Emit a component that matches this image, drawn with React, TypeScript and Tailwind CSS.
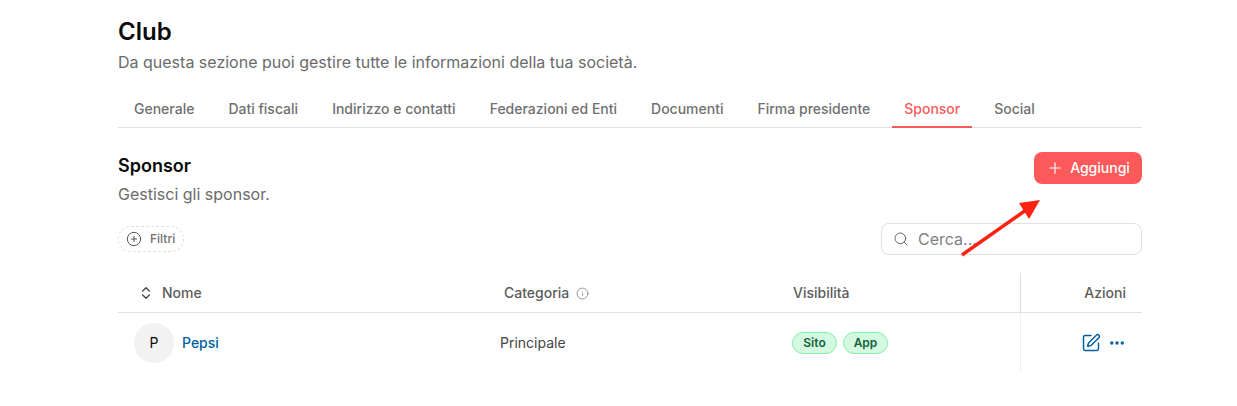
import { ChevronsUpDown, Ellipsis, Info, CirclePlus, Plus, Search, SquarePen } from 'lucide-react';

const tabs = [
  'Generale',
  'Dati fiscali',
  'Indirizzo e contatti',
  'Federazioni ed Enti',
  'Documenti',
  'Firma presidente',
  'Sponsor',
  'Social',
];

const App = () => {
  return (
    <div className="relative min-h-screen bg-white font-['Inter',sans-serif] overflow-hidden">
      <div className="w-[1024px] ml-[118px] pt-[16px]">
        {/* Intestazione */}
        <h1 className="text-2xl leading-8 font-semibold text-[#0a0a0a]">Club</h1>
        <p className="mt-[2px] text-base leading-6 text-[#6b6b6b]">
          Da questa sezione puoi gestire tutte le informazioni della tua società.
        </p>

        {/* Tabs */}
        <div className="mt-[14px] flex border-b border-[#e0e0e0] h-[40px] pl-[4px]">
          {tabs.map((tab) => (
            <div
              key={tab}
              className={`px-[12px] mr-[10px] pt-[4px] flex items-center text-sm font-[450] h-[40px] border-b-2 ${
                tab === 'Sponsor' ? 'text-[#fc5a5a] border-[#fc5a5a]' : 'text-[#707070] border-transparent'
              }`}
            >
              {tab}
            </div>
          ))}
        </div>

        {/* Sezione sponsor */}
        <div className="mt-[24px] flex justify-between items-start">
          <div>
            <h2 className="text-lg leading-7 font-semibold text-[#0a0a0a]">Sponsor</h2>
            <p className="mt-[2px] text-base leading-6 text-[#6b6b6b]">Gestisci gli sponsor.</p>
          </div>
          <button className="h-[32px] w-[108px] rounded-lg bg-[#fc5a5a] text-white text-sm font-[450] flex items-center justify-center gap-[6px]">
            <Plus size={18} strokeWidth={1.5} />
            Aggiungi
          </button>
        </div>

        {/* Filtri */}
        <div className="mt-[17px] flex justify-between items-center">
          <div className="h-[26px] pl-[7px] pr-[8px] rounded-full border border-dashed border-[#e0e0e0] flex items-center gap-[8px] text-xs font-[450] text-[#707070]">
            <CirclePlus size={16} strokeWidth={1.5} className="text-[#555555]" />
            Filtri
          </div>
          <div className="w-[261px] h-[32px] rounded-lg border border-[#e0e0e0] flex items-center gap-[9px] px-[11px] text-base text-[#808080]">
            <Search size={16} strokeWidth={1.5} className="text-[#666666]" />
            Cerca...
          </div>
        </div>

        {/* Tabella */}
        <div className="mt-[18px] grid grid-cols-[374px_289px_239px_122px] text-sm">
          <div className="h-[40px] border-b border-[#e0e0e0] flex items-center gap-[8px] pl-[20px] font-[450] text-[#5c5c5c]">
            <ChevronsUpDown size={16} strokeWidth={2} className="text-[#444444]" />
            Nome
          </div>
          <div className="h-[40px] border-b border-[#e0e0e0] flex items-center gap-[4px] pl-[12px] font-[450] text-[#5c5c5c]">
            Categoria
            <Info size={13} strokeWidth={1.5} className="ml-[3px] mt-[1px] text-[#808080]" />
          </div>
          <div className="h-[40px] border-b border-[#e0e0e0] flex items-center pl-[12px] font-[450] text-[#5c5c5c]">
            Visibilità
          </div>
          <div className="h-[40px] border-b border-[#e0e0e0] border-l flex items-center justify-end pr-[16px] font-[450] text-[#5c5c5c]">
            Azioni
          </div>

          <div className="h-[60px] flex items-center gap-[8px] pl-[16px]">
            <div className="w-[40px] h-[40px] rounded-full bg-[#f2f2f2] flex items-center justify-center text-[#0a0a0a]">
              P
            </div>
            <span className="font-[450] text-[#005f9e]">Pepsi</span>
          </div>
          <div className="h-[60px] flex items-center pl-[8px] text-[#444444]">Principale</div>
          <div className="h-[60px] flex items-center gap-[6px] pl-[11px]">
            <span className="h-[22px] w-[45px] rounded-full bg-[#d3f9e0] border border-[#86efac] flex items-center justify-center text-xs font-semibold text-[#14633a]">
              Sito
            </span>
            <span className="h-[22px] w-[45px] rounded-full bg-[#d3f9e0] border border-[#86efac] flex items-center justify-center text-xs font-semibold text-[#14633a]">
              App
            </span>
          </div>
          <div className="h-[60px] border-l border-[#f0f0f0] flex items-center justify-end gap-[7px] pr-[16px] text-[#005f9e]">
            <SquarePen size={20} strokeWidth={1.75} />
            <Ellipsis size={18} strokeWidth={2.5} />
          </div>
        </div>
      </div>

      {/* Freccia annotazione */}
      <svg className="absolute left-[950px] top-[190px]" width="100" height="75" viewBox="0 0 100 75">
        <line x1="12" y1="65" x2="76" y2="20" stroke="#ff2212" strokeWidth="3.5" />
        <polygon points="90,10 69,13 79,29" fill="#ff2212" />
      </svg>
    </div>
  );
};

export default App;
